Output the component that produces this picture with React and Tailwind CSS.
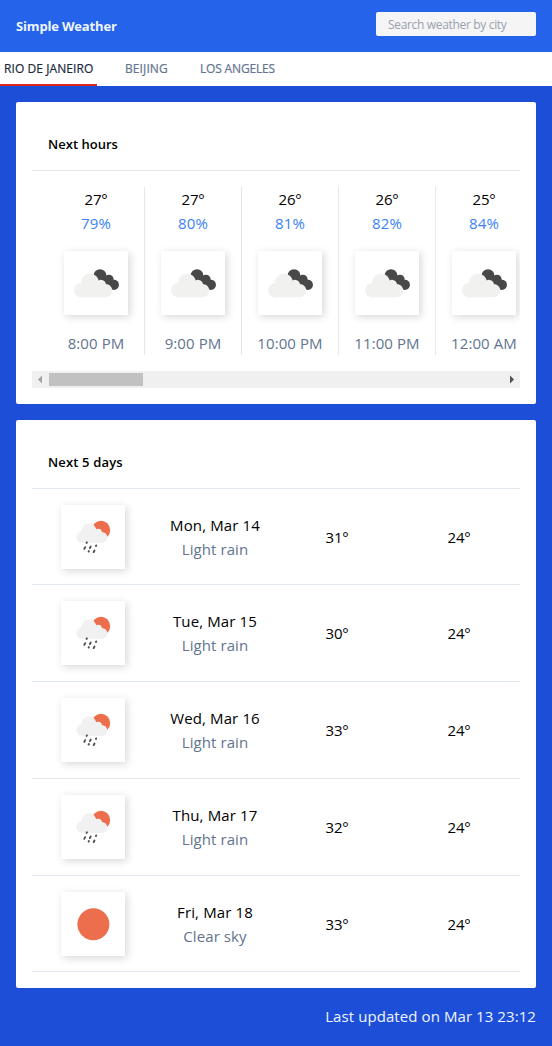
const hours = [
  { temp: '27°', humidity: '79%', time: '8:00 PM' },
  { temp: '27°', humidity: '80%', time: '9:00 PM' },
  { temp: '26°', humidity: '81%', time: '10:00 PM' },
  { temp: '26°', humidity: '82%', time: '11:00 PM' },
  { temp: '25°', humidity: '84%', time: '12:00 AM' },
];

const days = [
  { date: 'Mon, Mar 14', text: 'Light rain', max: '31°', min: '24°', icon: 'rain', height: 'h-24' },
  { date: 'Tue, Mar 15', text: 'Light rain', max: '30°', min: '24°', icon: 'rain', height: 'h-[97px]' },
  { date: 'Wed, Mar 16', text: 'Light rain', max: '33°', min: '24°', icon: 'rain', height: 'h-[97px]' },
  { date: 'Thu, Mar 17', text: 'Light rain', max: '32°', min: '24°', icon: 'rain', height: 'h-[97px]' },
  { date: 'Fri, Mar 18', text: 'Clear sky', max: '33°', min: '24°', icon: 'sun', height: 'h-24' },
];

function Clouds() {
  return (
    <svg viewBox="0 0 64 64" className="size-full">
      <g fill="#484848">
        <circle cx="36" cy="24.6" r="6.4" />
        <circle cx="45" cy="28.3" r="4.6" />
        <circle cx="49.9" cy="33.8" r="5.1" />
        <path d="M34 27 44 24.5 52 38 47 38 40 33Z" />
      </g>
      <g fill="#f1f1f0">
        <circle cx="17.3" cy="39.2" r="7.2" />
        <circle cx="26" cy="31.3" r="8.8" />
        <circle cx="36.9" cy="34" r="5.2" />
        <circle cx="41.5" cy="39.6" r="6.7" />
        <path d="M17 33h24v13.3H17Z" />
      </g>
    </svg>
  );
}

function Rain() {
  return (
    <svg viewBox="0 0 64 64" className="size-full">
      <circle cx="40" cy="24.9" r="9.2" fill="#ec6e4c" />
      <g fill="#f1f1f1">
        <circle cx="21.4" cy="32.1" r="6" />
        <circle cx="28" cy="25.5" r="7.2" />
        <circle cx="37" cy="27.8" r="4" />
        <circle cx="40.7" cy="32.5" r="5.6" />
        <path d="M21 27h20v11.1H21Z" />
      </g>
      <g stroke="#505050" strokeWidth="1.9" strokeLinecap="round">
        <path d="m25.9 37.3-.3.7M24.1 42.2l-.8 1.6M29.7 41.5l-.8 1.6M27.9 46l-.3.6M35.2 40.4l-.3.6M33.5 45.5l-.8 1.6" />
      </g>
    </svg>
  );
}

function Sun() {
  return (
    <svg viewBox="0 0 64 64" className="size-full">
      <circle cx="32.4" cy="32.3" r="16" fill="#ec6e4c" />
    </svg>
  );
}

const icons = { clouds: Clouds, rain: Rain, sun: Sun };

function IconTile({ name }) {
  const Icon = icons[name];
  return (
    <div className="size-16 shrink-0 bg-white shadow-[2px_2px_8px_rgba(0,0,0,0.16)]">
      <Icon />
    </div>
  );
}

export default function App() {
  return (
    <div className="h-[1046px] w-[552px] overflow-hidden bg-[#1d4ed8] font-['Open_Sans','Noto_Sans',sans-serif] text-[15px] leading-6 tracking-[0.08px] text-black">
      <header className="flex h-[52px] items-center justify-between bg-[#2563eb] px-4">
        <h1 className="text-[13px] font-bold tracking-[-0.17px] text-blue-50">Simple Weather</h1>
        <input
          className="mb-1 h-6 w-40 rounded-xs bg-neutral-100 px-3 text-xs tracking-[-0.33px] outline-none placeholder:text-gray-400"
          placeholder="Search weather by city"
        />
      </header>

      <nav className="flex h-[34px] gap-7 bg-white text-xs font-medium text-slate-500 [-webkit-text-stroke:0.2px]">
        <a className="w-[97px] border-b-2 border-[#dc2626] pt-[9px] pl-1 tracking-[0.08px] whitespace-nowrap text-slate-800">RIO DE JANEIRO</a>
        <a className="w-[47px] pt-[9px] tracking-[0.1px] whitespace-nowrap">BEIJING</a>
        <a className="pt-[9px] tracking-[-0.17px] whitespace-nowrap">LOS ANGELES</a>
      </nav>

      <main className="flex flex-col gap-4 px-4 pt-4">
        <section className="h-[302px] rounded-xs bg-white px-4 pt-4">
          <h2 className="h-[53px] border-b border-slate-200 pt-3.5 pl-4 text-[13px] font-semibold tracking-[0.02px]">Next hours</h2>
          <div className="mt-4 flex overflow-hidden pl-4">
            {hours.map((h) => (
              <div key={h.time} className="flex w-[97px] shrink-0 flex-col items-center border-r border-slate-200 whitespace-nowrap">
                <span className="tracking-[-0.2px]">{h.temp}</span>
                <span className="mb-4 text-[#3b82f6]">{h.humidity}</span>
                <IconTile name="clouds" />
                <span className="mt-4 text-slate-500">{h.time}</span>
              </div>
            ))}
          </div>
          <div className="mt-4 flex h-[17px] items-center bg-[#f0f0f0]">
            <svg viewBox="0 0 17 17" className="size-[17px]"><path d="M10 4.5v8L6 8.5Z" fill="#a3a3a3" /></svg>
            <div className="h-[13px] w-[94px] bg-[#c1c1c1]" />
            <svg viewBox="0 0 17 17" className="ml-auto size-[17px]"><path d="M7 4.5v8l4-4Z" fill="#505050" /></svg>
          </div>
        </section>

        <section className="h-[568px] rounded-xs bg-white px-4 pt-4">
          <h2 className="h-[53px] border-b border-slate-200 pt-3.5 pl-4 text-[13px] font-semibold tracking-[0.15px]">Next 5 days</h2>
          {days.map((d) => (
            <div key={d.date} className={`${d.height} grid grid-cols-4 items-center justify-items-center border-b border-slate-200 text-center`}>
              <IconTile name={d.icon} />
              <div className="whitespace-nowrap">
                <div className="tracking-[0.13px]">{d.date}</div>
                <div className="text-slate-500">{d.text}</div>
              </div>
              <span className="tracking-[-0.2px]">{d.max}</span>
              <span className="tracking-[-0.2px]">{d.min}</span>
            </div>
          ))}
        </section>
      </main>

      <footer className="px-4 pt-4 text-right text-blue-50">Last updated on Mar 13 23:12</footer>
    </div>
  );
}
